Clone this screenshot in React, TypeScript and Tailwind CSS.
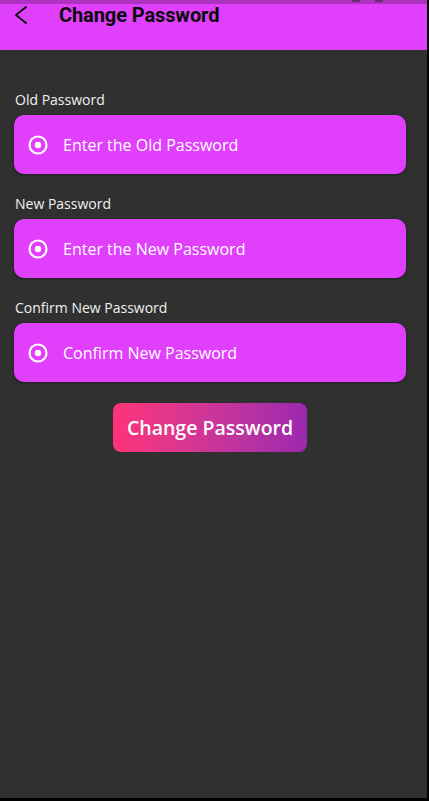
const fields = [
    { label: "Old Password", placeholder: "Enter the Old Password" },
    { label: "New Password", placeholder: "Enter the New Password" },
    { label: "Confirm New Password", placeholder: "Confirm New Password" },
]

function RadioIcon() {
    return (
        <svg width="22" height="22" viewBox="0 0 22 22" fill="none">
            <circle cx="11" cy="11" r="8.5" stroke="white" strokeWidth="2.2" />
            <circle cx="11" cy="11" r="3.2" fill="white" />
        </svg>
    )
}

export default function App() {
    return (
        <div className="w-[429px] h-[801px] bg-black overflow-hidden">
            <div className="w-[427px] h-[798px] bg-[#303030] flex flex-col">
                <div className="h-[4px] bg-[#ae32c2] relative">
                    <div className="absolute left-[352px] top-0 w-[8px] h-[2px] bg-[#6a2a78]" />
                    <div className="absolute left-[375px] top-0 w-[8px] h-[2px] bg-[#6a2a78]" />
                </div>
                <div className="h-[46px] bg-[#e040fb] flex items-start">
                    <svg className="ml-[14px] mt-[1px]" width="14" height="20" viewBox="0 0 14 20" fill="none">
                        <polyline points="12,2 2,10 12,18" stroke="#111" strokeWidth="2" strokeLinecap="round" strokeLinejoin="round" />
                    </svg>
                    <h1 className="ml-[31px] mt-[-4px] text-[20px] font-bold text-[#0a0a0a] font-['Roboto',sans-serif] tracking-[-0.1px]">
                        Change Password
                    </h1>
                </div>

                <div className="flex flex-col px-[14px] pt-[41px] font-['Open_Sans',sans-serif]">
                    {fields.map((f, i) => (
                        <div key={i} className="flex flex-col mb-[21px]">
                            <p className="text-[14px] text-[#f0f0f0] pl-[1px] leading-[18px]">{f.label}</p>
                            <div className="mt-[6px] w-[392px] h-[59px] rounded-[10px] bg-[#e040fb] shadow-[0_1px_3px_rgba(0,0,0,0.35)] flex items-center pl-[13px]">
                                <RadioIcon />
                                <span className="ml-[14px] text-[16px] text-white">{f.placeholder}</span>
                            </div>
                        </div>
                    ))}

                    <div className="flex justify-center w-[392px]">
                        <button className="w-[194px] h-[49px] rounded-[8px] bg-gradient-to-r from-[#ff3278] to-[#9c27b0] text-white text-[19.5px] font-semibold">
                            Change Password
                        </button>
                    </div>
                </div>
            </div>
        </div>
    )
}
